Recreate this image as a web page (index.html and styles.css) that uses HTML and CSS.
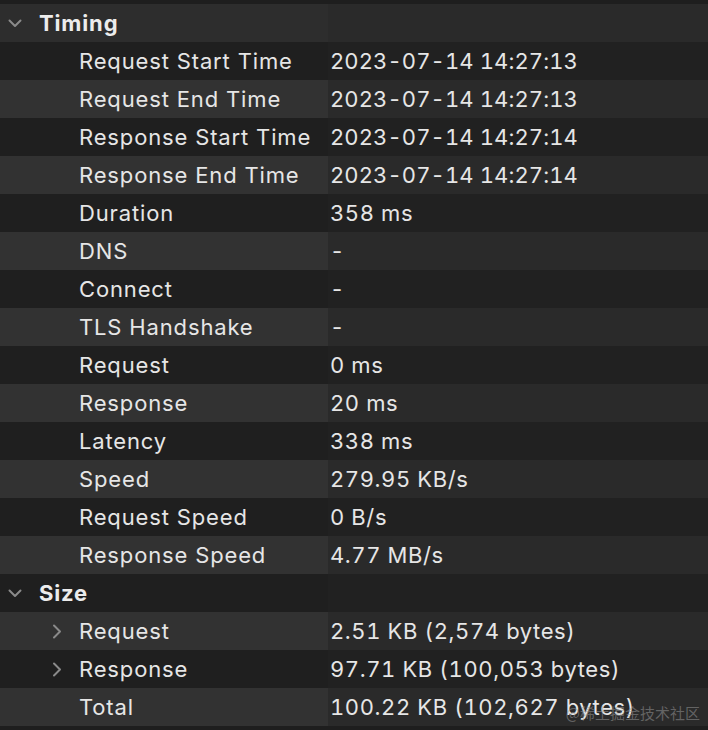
FILE: index.html
```html
<!DOCTYPE html>
<html>
<head>
<meta charset="utf-8">
<link rel="stylesheet" href="styles.css">
</head>
<body>
<div class="table">
  <div class="row light header">
    <div class="cell key"><svg class="chev-down" width="14" height="9" viewBox="0 0 14 9"><path d="M1.5 1.5 L7 7 L12.5 1.5" fill="none" stroke="#8a8a8a" stroke-width="2" stroke-linecap="round" stroke-linejoin="round"/></svg><span>Timing</span></div>
    <div class="cell val"></div>
  </div>
  <div class="row dark"><div class="cell key item">Request Start Time</div><div class="cell val date">2023-07-14 14:27:13</div></div>
  <div class="row light"><div class="cell key item">Request End Time</div><div class="cell val date">2023-07-14 14:27:13</div></div>
  <div class="row dark"><div class="cell key item">Response Start Time</div><div class="cell val date">2023-07-14 14:27:14</div></div>
  <div class="row light"><div class="cell key item">Response End Time</div><div class="cell val date">2023-07-14 14:27:14</div></div>
  <div class="row dark"><div class="cell key item">Duration</div><div class="cell val">358 ms</div></div>
  <div class="row light"><div class="cell key item">DNS</div><div class="cell val">-</div></div>
  <div class="row dark"><div class="cell key item">Connect</div><div class="cell val">-</div></div>
  <div class="row light"><div class="cell key item">TLS Handshake</div><div class="cell val">-</div></div>
  <div class="row dark"><div class="cell key item">Request</div><div class="cell val">0 ms</div></div>
  <div class="row light"><div class="cell key item">Response</div><div class="cell val">20 ms</div></div>
  <div class="row dark"><div class="cell key item">Latency</div><div class="cell val">338 ms</div></div>
  <div class="row light"><div class="cell key item">Speed</div><div class="cell val">279.95 KB/s</div></div>
  <div class="row dark"><div class="cell key item">Request Speed</div><div class="cell val">0 B/s</div></div>
  <div class="row light"><div class="cell key item">Response Speed</div><div class="cell val">4.77 MB/s</div></div>
  <div class="row dark header">
    <div class="cell key"><svg class="chev-down" width="14" height="9" viewBox="0 0 14 9"><path d="M1.5 1.5 L7 7 L12.5 1.5" fill="none" stroke="#8a8a8a" stroke-width="2" stroke-linecap="round" stroke-linejoin="round"/></svg><span>Size</span></div>
    <div class="cell val"></div>
  </div>
  <div class="row light"><div class="cell key item"><svg class="chev-right" width="10" height="15" viewBox="0 0 10 15"><path d="M2 1.5 L8 7.5 L2 13.5" fill="none" stroke="#8a8a8a" stroke-width="2" stroke-linecap="round" stroke-linejoin="round"/></svg>Request</div><div class="cell val">2.51 KB (2,574 bytes)</div></div>
  <div class="row dark"><div class="cell key item"><svg class="chev-right" width="10" height="15" viewBox="0 0 10 15"><path d="M2 1.5 L8 7.5 L2 13.5" fill="none" stroke="#8a8a8a" stroke-width="2" stroke-linecap="round" stroke-linejoin="round"/></svg>Response</div><div class="cell val">97.71 KB (100,053 bytes)</div></div>
  <div class="row light"><div class="cell key item">Total</div><div class="cell val">100.22 KB (102,627 bytes)</div></div>
</div>
<div class="watermark">@稀土掘金技术社区</div>
</body>
</html>
```

FILE: styles.css
```css
html, body {
  margin: 0;
  padding: 0;
  background: #1e1e1e;
  width: 708px;
  height: 730px;
  overflow: hidden;
}
body {
  font-family: Inter, "Noto Sans", sans-serif;
  font-size: 22px;
  letter-spacing: 0.85px;
  color: #e6e6e6;
  position: relative;
}
.table {
  padding-top: 4px;
  display: flex;
  flex-direction: column;
}
.row {
  display: grid;
  grid-template-columns: 328px 1fr;
  height: 38px;
}
.cell {
  display: flex;
  align-items: center;
  white-space: nowrap;
}
.light .key { background: #323232; }
.light .val { background: #2a2a2a; }
.dark .key { background: #1f1f1f; }
.dark .val { background: #212121; }
.header.light .key { background: #2d2d2d; }
.header.light .val { background: #2a2a2a; }
.key { padding-left: 8px; }
.key.item { padding-left: 79px; position: relative; }
.val {
  padding-left: 2px;
  font-feature-settings: "tnum" 1;
  letter-spacing: 0.6px;
}
.val.date { letter-spacing: 0.1px; }
.header span {
  font-weight: 700;
  margin-left: 17px;
  color: #ececec;
}
.chev-down { flex: none; }
.chev-right {
  position: absolute;
  left: 52px;
  top: 12px;
}
.watermark {
  position: absolute;
  right: 8px;
  bottom: 7px;
  font-family: "Noto Sans CJK SC", sans-serif;
  font-size: 15px;
  letter-spacing: 0;
  color: rgba(150,150,150,0.55);
}
```
